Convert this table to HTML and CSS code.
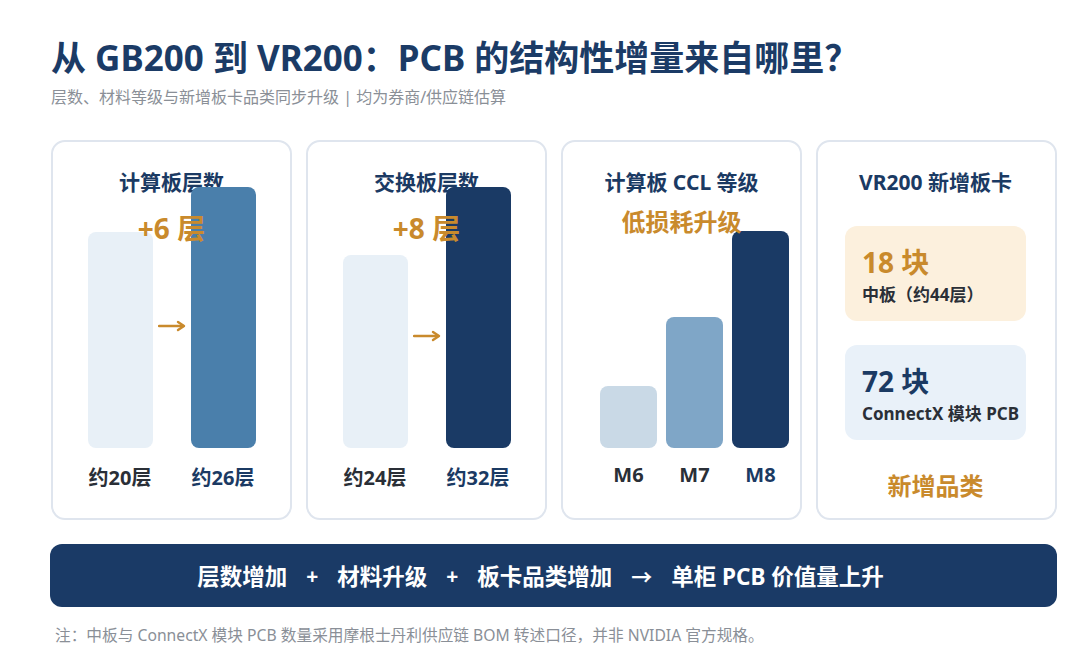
FILE: index.html
```html
<!DOCTYPE html>
<html lang="zh-CN">
<head>
<meta charset="utf-8">
<title>从 GB200 到 VR200：PCB 的结构性增量来自哪里？</title>
<link rel="stylesheet" href="styles.css">
</head>
<body>
<div class="page">
  <header class="head">
    <h1 class="title">从 GB200 到 VR200：PCB 的结构性增量来自哪里？</h1>
    <p class="subtitle">层数、材料等级与新增板卡品类同步升级 | 均为券商/供应链估算</p>
  </header>

  <section class="cards">
    <div class="card">
      <div class="card-title">计算板层数</div>
      <div class="delta">+6 层</div>
      <div class="chart pair">
        <div class="bar bar-light" style="height:216px"></div>
        <div class="gap-slot"><svg class="arrow" style="margin-bottom:116px" width="28" height="12" viewBox="0 0 28 12"><path d="M1 6H25" /><path d="M20 2L26 6L20 10" /></svg></div>
        <div class="bar bar-mid" style="height:261px"></div>
      </div>
      <div class="labels pair">
        <span class="lab">约20层</span>
        <span class="lab lab-navy">约26层</span>
      </div>
    </div>

    <div class="card">
      <div class="card-title">交换板层数</div>
      <div class="delta">+8 层</div>
      <div class="chart pair">
        <div class="bar bar-light" style="height:193px"></div>
        <div class="gap-slot"><svg class="arrow" style="margin-bottom:106px" width="28" height="12" viewBox="0 0 28 12"><path d="M1 6H25" /><path d="M20 2L26 6L20 10" /></svg></div>
        <div class="bar bar-navy" style="height:261px"></div>
      </div>
      <div class="labels pair">
        <span class="lab">约24层</span>
        <span class="lab lab-navy">约32层</span>
      </div>
    </div>

    <div class="card">
      <div class="card-title">计算板 CCL 等级</div>
      <div class="delta delta-sm">低损耗升级</div>
      <div class="chart trio">
        <div class="bar bar-m6" style="height:62px"></div>
        <div class="bar bar-m7" style="height:131px"></div>
        <div class="bar bar-navy" style="height:217px"></div>
      </div>
      <div class="labels trio">
        <span class="lab">M6</span>
        <span class="lab">M7</span>
        <span class="lab lab-navy">M8</span>
      </div>
    </div>

    <div class="card card-boards">
      <div class="card-title">VR200 新增板卡</div>
      <div class="box box-cream">
        <div class="box-num num-orange">18 块</div>
        <div class="box-desc">中板（约44层）</div>
      </div>
      <div class="box box-blue">
        <div class="box-num num-navy">72 块</div>
        <div class="box-desc">ConnectX 模块 PCB</div>
      </div>
      <div class="new-cat">新增品类</div>
    </div>
  </section>

  <div class="summary">
    <span>层数增加</span><span class="op">+</span><span>材料升级</span><span class="op">+</span><span>板卡品类增加</span><span class="op">→</span><span>单柜 PCB 价值量上升</span>
  </div>

  <p class="note">注：中板与 ConnectX 模块 PCB 数量采用摩根士丹利供应链 BOM 转述口径，并非 NVIDIA 官方规格。</p>
</div>
</body>
</html>
```

FILE: styles.css
```css
* { box-sizing: border-box; }

html, body {
  margin: 0;
  padding: 0;
  background: #ffffff;
}

body {
  width: 1080px;
  height: 656px;
  overflow: hidden;
  font-family: "Noto Sans", "Noto Sans CJK SC", sans-serif;
  color: #1b3a63;
}

.page {
  padding: 36px 23px 0 51px;
}

.head {
  margin: 0;
}

.title {
  margin: 0;
  font-size: 35px;
  line-height: 44px;
  font-weight: 700;
  color: #1b3b66;
  letter-spacing: 0;
  white-space: nowrap;
}

.subtitle {
  margin: 6px 0 0;
  font-size: 16px;
  line-height: 22px;
  color: #8a8f97;
  font-weight: 400;
  white-space: nowrap;
}

.cards {
  margin-top: 32px;
  display: grid;
  grid-template-columns: repeat(4, 1fr);
  gap: 14px;
}

.card {
  height: 380px;
  border: 2px solid #dfe5ee;
  border-radius: 14px;
  background: #ffffff;
  display: flex;
  flex-direction: column;
  align-items: center;
  padding-top: 26px;
}

.card-title {
  font-size: 21px;
  line-height: 28px;
  font-weight: 700;
  color: #1b3a63;
  white-space: nowrap;
}

.delta {
  margin-top: 15px;
  font-size: 28px;
  line-height: 34px;
  font-weight: 700;
  color: #c98a2c;
  z-index: 2;
  white-space: nowrap;
}

.delta-sm {
  margin-top: 11px;
  font-size: 24px;
  line-height: 30px;
}

.chart {
  z-index: 1;
  display: flex;
  align-items: flex-end;
  height: 261px;
  margin-top: -58px;
}

.trio.chart {
  margin-top: -50px;
}

.pair { gap: 0; }
.pair .bar, .pair .lab { width: 65px; }

.gap-slot {
  width: 38px;
  align-self: stretch;
  display: flex;
  align-items: flex-end;
  justify-content: center;
}

.arrow {
  display: block;
  fill: none;
  stroke: #c98a2c;
  stroke-width: 2.4;
  stroke-linecap: round;
  stroke-linejoin: round;
}

.trio {
  gap: 9px;
  margin-left: 26px;
}
.trio .bar, .trio .lab { width: 57px; }

.bar {
  border-radius: 8px;
}

.bar-light { background: #e8f0f7; }
.bar-mid { background: #4a7fab; }
.bar-navy { background: #1a3a65; }
.bar-m6 { background: #c9d9e6; }
.bar-m7 { background: #7fa6c7; }

.labels {
  display: flex;
  margin-top: 17px;
}

.labels.pair .lab:last-child { margin-left: 38px; }

.lab {
  text-align: center;
  font-size: 20px;
  line-height: 26px;
  font-weight: 700;
  color: #2a2f37;
  white-space: nowrap;
  display: flex;
  justify-content: center;
}

.trio.labels { margin-top: 14px; }

.lab-navy { color: #1b3a63; }

.card-boards {
  padding-left: 27px;
  padding-right: 29px;
  align-items: stretch;
}

.card-boards .card-title {
  text-align: center;
}

.box {
  margin-top: 30px;
  border-radius: 12px;
  padding: 19px 6px 15px 17px;
}

.box + .box { margin-top: 24px; }

.box-cream { background: #fcf0dd; }
.box-blue { background: #e9f1f9; }

.box-num {
  font-size: 28px;
  line-height: 34px;
  font-weight: 700;
  white-space: nowrap;
}

.num-orange { color: #c98a2c; }
.num-navy { color: #1b3a63; }

.box-desc {
  margin-top: 5px;
  font-size: 17px;
  line-height: 22px;
  font-weight: 700;
  color: #2a2f37;
  white-space: nowrap;
}

.new-cat {
  margin-top: 31px;
  text-align: center;
  font-size: 24px;
  line-height: 30px;
  font-weight: 700;
  color: #c98a2c;
}

.summary {
  margin-top: 24px;
  margin-left: -1px;
  height: 63px;
  padding-right: 26px;
  border-radius: 12px;
  background: #1a3a66;
  color: #ffffff;
  font-size: 22.5px;
  font-weight: 700;
  display: flex;
  align-items: center;
  justify-content: center;
  white-space: nowrap;
}

.op {
  margin: 0 19px;
  font-size: 21px;
}

.note {
  margin: 17px 0 0 4px;
  font-size: 15.7px;
  line-height: 22px;
  color: #8a8f97;
  white-space: nowrap;
}
```
